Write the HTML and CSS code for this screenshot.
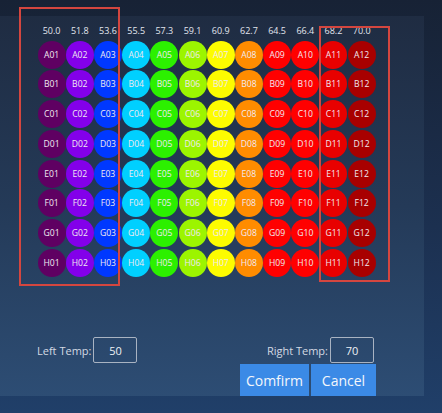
FILE: index.html
```html
<!DOCTYPE html>
<html lang="en">
  <head>
    <meta charset="UTF-8" />
    <meta name="viewport" content="width=device-width, initial-scale=1.0" />
    <title>Plate Gradient</title>
    <link rel="stylesheet" href="styles.css">
  </head>
  <body>
    <div class="panel">
      <div class="temps" id="temps"></div>
      <div class="plate" id="plate"></div>

      <div class="controls">
        <div class="temp-row">
          <div class="temp-group">
            <label for="left-temp">Left Temp:</label>
            <input type="text" id="left-temp" value="50" />
          </div>
          <div class="temp-group right">
            <label for="right-temp">Right Temp:</label>
            <input type="text" id="right-temp" value="70" />
          </div>
        </div>
        <div class="actions">
          <button class="btn confirm">Comfirm</button>
          <button class="btn cancel">Cancel</button>
        </div>
      </div>

      <div class="mark mark-left"></div>
      <div class="mark mark-right"></div>
    </div>

    <script>
      const rows = "ABCDEFGH";
      const temps = document.getElementById("temps");
      const plate = document.getElementById("plate");

      for (let c = 0; c < 12; c++) {
        const t = document.createElement("span");
        t.textContent = (50 + (c * 20) / 11).toFixed(1);
        temps.appendChild(t);
      }

      for (let r = 0; r < rows.length; r++) {
        for (let c = 1; c <= 12; c++) {
          const well = document.createElement("div");
          well.className = "well c" + c;
          well.textContent = rows[r] + String(c).padStart(2, "0");
          plate.appendChild(well);
        }
      }
    </script>
  </body>
</html>
```

FILE: styles.css
```css
body {
  margin: 0;
  width: 442px;
  height: 413px;
  overflow: hidden;
  font-family: "Open Sans", "DejaVu Sans", sans-serif;
  background: linear-gradient(180deg, #172235 0%, #1c3050 55%, #203f69 100%);
  color: #dde2ea;
}
.panel {
  position: relative;
  margin-top: 16px;
  width: 424px;
  height: 380px;
  box-sizing: border-box;
  padding-top: 7.5px;
  display: flex;
  flex-direction: column;
  background: linear-gradient(180deg, #1f2c42 0%, #243a58 50%, #2d4d74 100%);
}
.temps,
.plate {
  display: grid;
  grid-template-columns: repeat(12, 28px);
  column-gap: 0.2px;
  margin-left: 37.6px;
}
.temps span {
  font-size: 9px;
  line-height: 14px;
  text-align: center;
  color: #e2e6ee;
}
.plate {
  margin-top: 3px;
  row-gap: 1.8px;
}
.well {
  width: 28px;
  height: 28px;
  border-radius: 50%;
  display: flex;
  align-items: center;
  justify-content: center;
  font-size: 8.6px;
  color: #f1eaf0;
}
.c1 { background: #5f0062; }
.c2 { background: #8300ea; }
.c3 { background: #0038ff; }
.c4 { background: #00d0ff; }
.c5 { background: #2cf000; }
.c6 { background: #9cf500; }
.c7 { background: #fdfc00; }
.c8 { background: #ff8c00; }
.c9 { background: #ff0000; }
.c10 { background: #ff0000; }
.c11 { background: #e80000; }
.c12 { background: #a80000; }

.controls {
  margin-top: auto;
  display: flex;
  flex-direction: column;
  gap: 1px;
}
.temp-row {
  display: flex;
  justify-content: space-between;
  padding: 0 50px 0 37px;
}
.temp-group {
  display: flex;
  align-items: center;
  gap: 2px;
}
.temp-group label {
  font-size: 11px;
  color: #d3d9e3;
}
.temp-group input {
  width: 44px;
  height: 26px;
  box-sizing: border-box;
  border: 1px solid #a9b3c2;
  border-radius: 2px;
  background: transparent;
  color: #eef1f5;
  font-family: inherit;
  font-size: 11px;
  text-align: center;
  padding: 0;
}
.actions {
  display: flex;
  justify-content: flex-end;
  gap: 2px;
  padding-right: 48px;
}
.btn {
  height: 32px;
  border: none;
  background: #3b8ae6;
  color: #f4f7fb;
  font-family: inherit;
  font-size: 14px;
  padding: 0;
  cursor: pointer;
}
.confirm {
  width: 69px;
}
.cancel {
  width: 65px;
}

/* selection markers drawn over the plate */
.mark {
  position: absolute;
  border: 2px solid #d4463f;
  box-sizing: border-box;
}
.mark-left {
  left: 19px;
  top: -9px;
  width: 101px;
  height: 279px;
}
.mark-right {
  left: 319px;
  top: 10px;
  width: 71px;
  height: 256px;
}
```
